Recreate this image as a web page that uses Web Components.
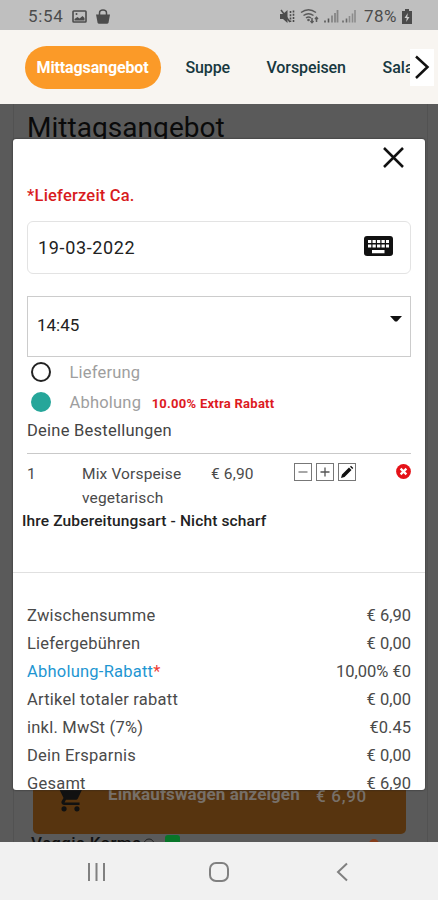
<!DOCTYPE html>
<html lang="de">
<head>
<meta charset="utf-8">
<title>Mittagsangebot</title>
<style>
html,body{margin:0;height:100%}
body{font-family:Roboto,"Liberation Sans",sans-serif;overflow:hidden}
</style>
</head>
<body>
<order-app></order-app>
<script>
const define = (name, html) => customElements.define(name, class extends HTMLElement {
  constructor() {
    super();
    const t = document.createElement('template');
    t.innerHTML = html;
    this.attachShadow({mode: 'open'}).appendChild(t.content.cloneNode(true));
  }
});

define('status-bar', `
<style>
:host{display:flex;align-items:center;justify-content:space-between;height:30px;box-sizing:border-box;padding:2px 26px 0 28px;background:#bfbfbf;color:#4c4c4c;font-size:17px}
div{display:flex;align-items:center}
.t{letter-spacing:.7px;width:44px;white-space:nowrap}
svg{display:block}
.p{letter-spacing:.5px;white-space:nowrap}
</style>
<div><span class="t">5:54</span>
<svg width="15" height="13" viewBox="0 0 15 13"><rect x="1" y="1" width="13" height="11" rx=".8" fill="none" stroke="#4c4c4c" stroke-width="1.6"/><circle cx="4.5" cy="4" r="1" fill="#4c4c4c"/><path d="M2.500 10.500V9l3-2 2 1.500L10.500 6l2 2v2.500z" fill="#4c4c4c"/></svg>
<svg width="14" height="15" viewBox="0 0 14 15" style="margin-left:9px"><path d="M0 5.500h14L12.500 13.500q-.3 1.300-1.600 1.300H3.100q-1.300 0-1.600-1.300z" fill="#4c4c4c"/><path d="M3.500 6.500V4q0-3 3.500-3t3.500 3v2.500" fill="none" stroke="#4c4c4c" stroke-width="1.500"/></svg></div>
<div>
<svg width="15" height="15" viewBox="0 0 15 15"><path d="M0 5h3l4.500-4v13L3 10H0z" fill="#4c4c4c"/><path d="M1 1l9 12" stroke="#4c4c4c" stroke-width="1.500"/><path d="M10.500 2v11M13.500 1.500v12" stroke="#4c4c4c" stroke-width="1.600" stroke-dasharray="2 1.200"/></svg>
<svg width="20" height="16" viewBox="0 0 20 16" style="margin-left:5px"><g fill="none" stroke="#5a5a5a" stroke-width="1.500"><path d="M1 4.500q7.500-5.500 15 0M3.500 7.500q5-3.500 10 0M6 10q2.500-1.800 5 0"/><path d="M12 10v4.500M10.500 13l1.500 1.700 1.500-1.700M16.500 14V9.500M15 11l1.500-1.700L18 11"/></g><circle cx="8.500" cy="12" r="1.300" fill="#5a5a5a"/></svg>
<svg width="32" height="13" viewBox="0 0 32 13" style="margin-left:4px"><path d="M1 12.500v-2M4.500 12.500v-4" stroke="#555" stroke-width="1.600"/><path d="M8 12.500V5.500M11 12.500V3M13.500 12.500V0" stroke="#858585" stroke-width="1.800"/><path d="M19 12.500v-2M22.500 12.500v-4" stroke="#6a6a6a" stroke-width="1.600"/><path d="M25.500 12.500V6M28.500 12.500V3.500M31 12.500V0" stroke="#8c8c8c" stroke-width="1.600"/></svg>
<span class="p" style="margin-left:8px;width:38px">78%</span>
<svg width="10" height="15" viewBox="0 0 10 15"><path d="M3 0h4v2h3v13H0V2h3z" fill="#4c4c4c"/><path d="M5.800 4L2.500 9H4.700L4.200 13 7.500 8H5.300z" fill="#ccc"/></svg></div>`);

define('category-chip', `
<style>
:host{display:flex;align-items:center;height:43px;border-radius:22px;font-weight:500;font-size:16px;color:#173840;white-space:nowrap;box-sizing:border-box}
:host([active]){background:#fb9a28;color:#fff;padding-left:11.500px;width:136px;font-weight:700}
</style><slot></slot>`);

define('category-nav', `
<style>
:host{display:flex;height:74px;box-sizing:border-box;background:#f8f5f1;padding:0 4px 0 25px;align-items:center;overflow:hidden}
.list{display:flex;width:385px;overflow:hidden;flex:none}
.arrow{background:#fff;width:24px;height:37px;flex:none;display:flex;align-items:center;justify-content:center}
category-chip{flex:none}
</style>
<div class="list">
<category-chip active style="letter-spacing:-.12px">Mittagsangebot</category-chip>
<category-chip style="margin-left:24.500px;width:81px;letter-spacing:-.15px">Suppe</category-chip>
<category-chip style="width:116px;letter-spacing:-.1px">Vorspeisen</category-chip>
<category-chip>Salate</category-chip>
</div>
<div class="arrow"><svg width="16" height="28" viewBox="0 0 16 28" style="margin-top:-1px"><path d="M2 3.500L13.500 14 2 25" fill="none" stroke="#111" stroke-width="2.500"/></svg></div>`);

define('menu-page', `
<style>
:host{display:flex;flex-direction:column;height:100%;box-sizing:border-box;padding:0 10px 0 13px;overflow:hidden;color:#0a0a0a;background:#5a5a5a}
.card{display:flex;flex-direction:column;border:1px solid #525252;border-width:0 1px 0 1px;height:738px}
h1{flex:none;font-weight:400;font-size:28px;line-height:34px;margin:7px 0 0 13px;height:636px;letter-spacing:.05px;white-space:nowrap}
.cart{flex:none;height:87px;width:373px;margin-left:19px;background:#57340f;border-radius:5px;display:flex;align-items:flex-start;color:#777069;font-weight:700;font-size:17px;white-space:nowrap;box-sizing:border-box;padding:36px 0 0 22px}
.dish{flex:none;height:30px;margin-left:17px;display:flex;font-weight:500;font-size:17px;line-height:19px;white-space:nowrap;color:#111}
svg{flex:none}
</style>
<div class="card">
<h1>Mittagsangebot</h1>
<div class="cart"><svg width="31" height="31" viewBox="0 0 24 24" style="margin-top:0"><path fill="#111" d="M7 18a2 2 0 1 0 0 4 2 2 0 0 0 0-4zM17 18a2 2 0 1 0 0 4 2 2 0 0 0 0-4zM1 2v2h2l3.600 7.600-1.400 2.400C4.500 15.400 5.500 17 7 17h12v-2H7.400l1.100-2h7.500c.7 0 1.400-.4 1.700-1L21 5H5.200l-.9-3z"/></svg>
<span style="margin-left:22px;width:208px;line-height:22px;letter-spacing:.1px">Einkaufswagen anzeigen</span><span style="line-height:26px;font-weight:500;letter-spacing:.7px">€ 6,90</span></div>
<div class="dish"><span style="letter-spacing:.3px;width:110px">Veggie Korma</span>
<svg width="12" height="12" viewBox="0 0 12 12" style="margin:4px 0 0 2px"><circle cx="6" cy="6" r="5" fill="none" stroke="#222"/></svg>
<svg width="15" height="14" viewBox="0 0 15 14" style="margin:1px 0 0 10px"><rect width="15" height="14" rx="3" fill="#087529"/></svg>
<svg width="10" height="10" viewBox="0 0 10 10" style="margin:5px 0 0 189px"><circle cx="5" cy="5" r="5" fill="#843d1c"/></svg></div>
</div>`);

define('choice-row', `
<style>
:host{display:flex;align-items:center;height:30px;flex:none;padding-left:4px;color:#9e9e9e;font-size:16.500px;letter-spacing:.2px;white-space:nowrap}
i{width:20px;height:20px;box-sizing:border-box;border:2px solid #222;border-radius:50%;margin-right:18.500px;flex:none}
:host([checked]) i{background:#26a69a;border-color:#26a69a}
b{color:#dd1a1f;font-size:13px;margin:2px 0 0 10.500px;letter-spacing:.26px}
</style><i></i><slot></slot><b><slot name="note"></slot></b>`);

define('icon-button', `
<style>
:host{display:flex;width:18px;height:18px;box-sizing:border-box;border:1px solid #777;align-items:center;justify-content:center}
</style><slot></slot>`);

define('total-row', `
<style>
:host{display:flex;justify-content:space-between;height:28px;line-height:28px;flex:none;white-space:nowrap}
.l{letter-spacing:.23px}
</style><span class="l"><slot></slot></span><span class="v"><slot name="value"></slot></span>`);

define('order-dialog', `
<style>
:host{display:flex;flex-direction:column;box-sizing:border-box;background:#fff;border-radius:3px;padding:0 14px;overflow:hidden;color:#4a4a4a;font-size:16.500px;box-shadow:0 0 2px #222}
:host>*{flex:none}
.close{height:40px;display:flex;justify-content:flex-end;padding:7px 6px 0 0;box-sizing:border-box}
.label{height:32px;line-height:33px;color:#d81b20;font-weight:500;font-size:16.500px;letter-spacing:.2px}
.date{margin-top:10px;height:53px;border:1px solid #e3e3e3;border-radius:6px;box-sizing:border-box;display:flex;align-items:center;justify-content:space-between;padding:0 17px 0 10px;color:#222;font-size:18px;letter-spacing:.65px}
.time{margin-top:22px;height:61px;border:1px solid #ccc;box-sizing:border-box;display:flex;align-items:center;justify-content:space-between;padding:0 8px 3px 9px;color:#222;font-size:17px}
.head{height:35px;padding-top:1px;line-height:26px;border-bottom:1px solid #c9c9c9;color:#444;letter-spacing:.24px}
.item{display:grid;grid-template-columns:55px 129px 83px 1fr auto;height:49px;padding-top:8px;line-height:24px;font-size:15.500px;letter-spacing:.15px}
.acts{display:flex;gap:4px;padding-top:1px}
.prep{margin:-2px -14px 0;padding-left:9px;height:64px;line-height:24px;font-weight:500;color:#222;font-size:15.500px;letter-spacing:.15px;border-bottom:1px solid #e0e0e0;box-sizing:border-box}
.totals{padding-top:29px}
</style>
<div class="close"><svg width="23" height="23" viewBox="0 0 23 23"><path d="M2 2l19 19M21 2L2 21" stroke="#111" stroke-width="2.500"/></svg></div>
<div class="label"><span>*Lieferzeit Ca.</span></div>
<div class="date"><span class="d">19-03-2022</span><svg width="29" height="20" viewBox="0 0 29 20" style="margin-top:-3px"><rect width="29" height="20" rx="3" fill="#111"/><path fill="#fff" d="M4 4h3.300v3H4zM8.500 4h3.300v3H8.500zM13 4h3.300v3H13zM17.500 4h3.300v3h-3.300zM22 4h3v3h-3zM4 8.500h3.300v3H4zM8.500 8.500h3.300v3H8.500zM13 8.500h3.300v3H13zM17.500 8.500h3.300v3h-3.300zM22 8.500h3v3h-3zM8 14h12.500v3.300H8z"/></svg></div>
<div class="time"><span>14:45</span><svg width="12" height="6" viewBox="0 0 12 6" style="margin-top:-13px"><path d="M0 0h12L7 5.500H5z" fill="#111"/></svg></div>
<choice-row>Lieferung</choice-row>
<choice-row checked>Abholung<span slot="note">10.00% Extra Rabatt</span></choice-row>
<div class="head"><span>Deine Bestellungen</span></div>
<div class="item"><span>1</span><span>Mix Vorspeise<br>vegetarisch</span><span>€ 6,90</span>
<div class="acts"><icon-button><svg width="12" height="12"><path d="M1.500 6h9" stroke="#777" stroke-width="1.300"/></svg></icon-button><icon-button><svg width="12" height="12"><path d="M1.500 6h9M6 1.500v9" stroke="#555" stroke-width="1.300"/></svg></icon-button><icon-button><svg width="14" height="14" viewBox="0 0 14 14"><path d="M1 13l1-3.500L9 2.500l2.500 2.500-7 7zM10 1.700l1-1 2.300 2.300-1 1z" fill="#111"/></svg></icon-button></div>
<svg width="15" height="15" viewBox="0 0 15 15" style="margin:2px 0 0"><circle cx="7.500" cy="7.500" r="7.400" fill="#e51218"/><path d="M4.600 4.600l5.800 5.800M10.400 4.600l-5.800 5.800" stroke="#fff" stroke-width="2.200"/></svg></div>
<div class="prep"><span>Ihre Zubereitungsart - Nicht scharf</span></div>
<div class="totals">
<total-row>Zwischensumme<span slot="value">€ 6,90</span></total-row>
<total-row>Liefergebühren<span slot="value">€ 0,00</span></total-row>
<total-row><span style="color:#1e96d2">Abholung-Rabatt</span><span style="color:#ee3b35">*</span><span slot="value">10,00% €0</span></total-row>
<total-row>Artikel totaler rabatt<span slot="value">€ 0,00</span></total-row>
<total-row>inkl. MwSt (7%)<span slot="value">€0.45</span></total-row>
<total-row>Dein Ersparnis<span slot="value">€ 0,00</span></total-row>
<total-row>Gesamt<span slot="value">€ 6,90</span></total-row>
</div>`);

define('system-nav', `
<style>
:host{display:flex;height:58px;background:#f1f1f1;align-items:center;padding:2px 90px 0 87px;box-sizing:border-box;justify-content:space-between}
g{fill:none;stroke:#808080;stroke-width:2}
</style>
<svg width="19" height="20"><g><path d="M2 1v18M9.500 1v18M17 1v18"/></g></svg>
<svg width="20" height="20" style="margin-right:4px"><g><rect x="1" y="1" width="18" height="18" rx="6"/></g></svg>
<svg width="12" height="20"><g><path d="M11 1.500L2 10l9 8.500"/></g></svg>`);

define('order-app', `
<style>
:host{display:flex;flex-direction:column;width:438px;height:900px;overflow:hidden}
main{position:relative;height:738px;flex:none}
order-dialog{position:absolute;left:13px;top:35px;width:412px;height:651px}
</style>
<status-bar></status-bar>
<category-nav></category-nav>
<main><menu-page></menu-page><order-dialog></order-dialog></main>
<system-nav></system-nav>`);
</script>
</body>
</html>
